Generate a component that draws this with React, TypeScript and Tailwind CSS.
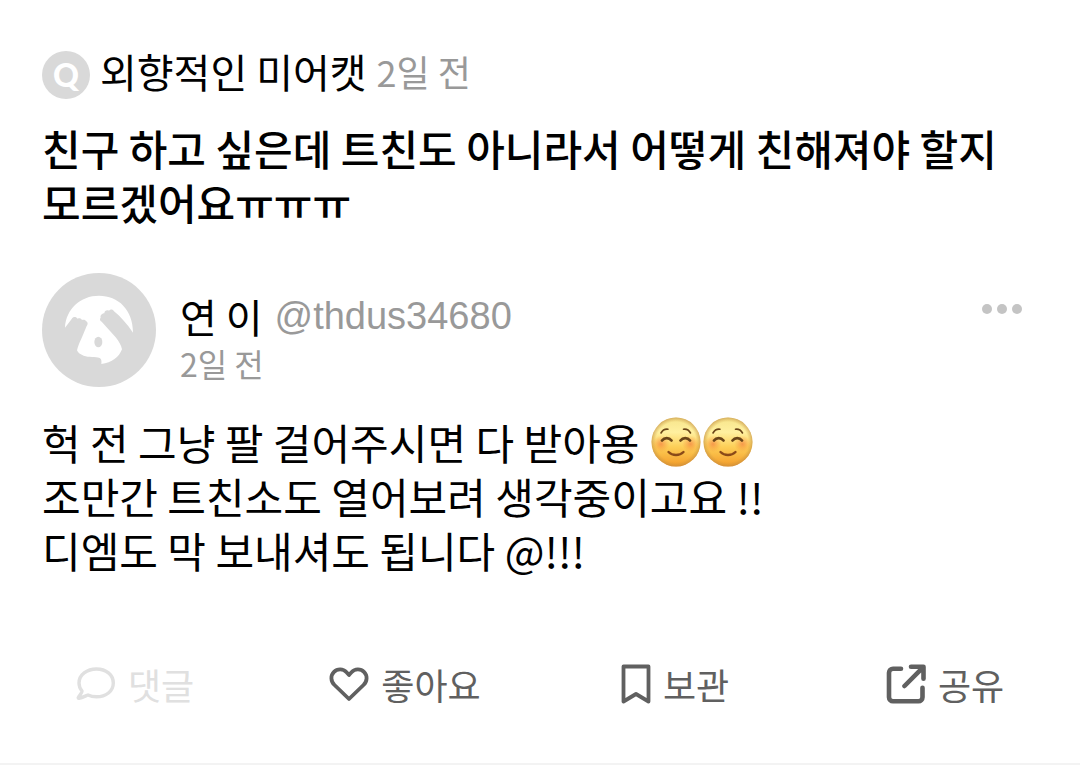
import React from "react";

interface ActionButtonProps {
  label: string;
  icon: React.ReactNode;
  disabled?: boolean;
}

const ActionButton: React.FC<ActionButtonProps> = ({ label, icon, disabled }) => {
  return (
    <button
      type="button"
      disabled={disabled}
      className="flex items-center justify-center gap-3 text-4xl leading-[54px] text-[#606060] disabled:text-[#e0e0e0]"
    >
      {icon}
      <span>{label}</span>
    </button>
  );
};

const CommentIcon = () => (
  <svg viewBox="0 0 40 40" className="w-10 h-10" fill="none" stroke="currentColor" strokeWidth="3.4" strokeLinejoin="round">
    <path d="M20.5 5C30 5 37.3 10.8 37.3 19s-7.3 13.8-16.8 13.8c-3 0-6-.6-8.5-1.8-1.6.5-5.5 2.7-9 3.3-.7.1-1-.6-.6-1.100 1.300-1.800 3.500-4.200 3.600-6.200C4.300 25 3 22.300 3 19 3 10.800 11 5 20.500 5Z" />
  </svg>
);

const HeartIcon = () => (
  <svg viewBox="0 0 40 40" className="w-10 h-10" fill="none" stroke="currentColor" strokeWidth="3.8" strokeLinejoin="round">
    <path d="M20 35 5.500 21C1.500 17 1.500 11.500 4.800 8.100c3.600-3.700 9.300-3.600 12.700.2L20 11l2.500-2.700c3.400-3.800 9.100-3.900 12.700-.2 3.300 3.400 3.300 8.900-.7 12.900Z" />
  </svg>
);

const BookmarkIcon = () => (
  <svg viewBox="0 0 30 40" className="w-[30px] h-10" fill="none" stroke="currentColor" strokeWidth="3.8" strokeLinejoin="round">
    <path d="M2.500 2.500h25v35L15 30 2.500 37.500Z" />
  </svg>
);

const ShareIcon = () => (
  <svg viewBox="0 0 40 40" className="w-10 h-10" fill="none" stroke="currentColor" strokeWidth="4.6" strokeLinecap="round" strokeLinejoin="round">
    <path d="M15 4.800H7A4 4 0 0 0 3 8.800v24.500a4 4 0 0 0 4 4h25.500a4 4 0 0 0 4-4v-9.500" />
    <path d="M25 2.800h12.500v12M37 3.300 18.500 22" />
  </svg>
);

const PandaAvatar = () => (
  <svg viewBox="0 0 342 342" className="w-[114px] h-[114px] shrink-0" role="img" aria-label="프로필">
    <circle cx="171" cy="171" r="171" fill="#d9d9d9" />
    <path
      fill="#fff"
      d="M69 164C72 108 115 68 171 68c58 0 102 42 102 111-18-26-37-48-57-64-3-6-11-7-15-2-7-3-14 1-14 8-7 0-13 7-11 13-4 4-2 10 3 12l42 47c10 12 16 23 19 36-9 24-30 40-62 44 1-8 1-14-5-18-12-5-33-1-48-7-10-4-17-8-20-16 3-14 9-26 14-37l15-36c4-5 4-11-1-14-2-4-8-6-13-4-3-6-9-6-13-4-5-6-13-7-18 1Z"
    />
    <ellipse cx="169" cy="207" rx="12" ry="16" fill="#d9d9d9" />
  </svg>
);

const SmileEmoji = () => (
  <svg viewBox="0 0 50 50" className="w-[50px] h-[50px]" role="img" aria-label="☺️">
    <defs>
      <linearGradient id="face" x1="0" y1="0" x2="0" y2="1">
        <stop offset="0" stopColor="#f7e48a" />
        <stop offset="0.3" stopColor="#fff0a0" />
        <stop offset="0.6" stopColor="#fdcf57" />
        <stop offset="1" stopColor="#f39a28" />
      </linearGradient>
      <radialGradient id="edge">
        <stop offset="0.82" stopColor="#c99a3a" stopOpacity="0" />
        <stop offset="1" stopColor="#c08a45" stopOpacity="0.6" />
      </radialGradient>
      <radialGradient id="cheek">
        <stop offset="0" stopColor="#f2703a" stopOpacity="0.6" />
        <stop offset="1" stopColor="#f58a35" stopOpacity="0" />
      </radialGradient>
    </defs>
    <circle cx="25" cy="25" r="24.5" fill="url(#face)" />
    <circle cx="25" cy="25" r="24.5" fill="url(#edge)" />
    <circle cx="10" cy="27" r="8.5" fill="url(#cheek)" />
    <circle cx="39.5" cy="27" r="8.5" fill="url(#cheek)" />
    <g fill="none" stroke="#6a4518" strokeLinecap="round">
      <path strokeWidth="1.6" d="M10 16c1.500-2.800 4-4.200 7-3.800M39.500 16c-1.500-2.800-4-4.200-7-3.800" />
      <path strokeWidth="2.8" d="M11 23.500c2.500-3.300 7-3.300 9.500 0M29.500 23.500c2.500-3.300 7-3.300 9.500 0" />
      <path strokeWidth="2.4" stroke="#8a4a18" d="M17.500 35c4 4 11 4 15 0" />
    </g>
  </svg>
);

const App: React.FC = () => {
  return (
    <main className="bg-white text-black font-['Noto_Sans_CJK_KR',sans-serif]">
      <article className="px-[42px] pt-11 pb-[52px] border-b-3 border-[#f3f3f3]">
        <header className="flex items-start gap-2.5 text-[40px] leading-[54px]">
          <span className="mt-[7px] flex items-center justify-center w-12 h-12 rounded-full bg-[#d9d9d9] text-white text-[32px] leading-none font-black font-['Lato',sans-serif]">
            Q
          </span>
          <span>외향적인 미어캣</span>
          <time className="text-4xl leading-[54px] text-[#999]">2일 전</time>
        </header>

        <h1 className="mt-[22px] text-[42px] leading-[54px] font-medium">
          친구 하고 싶은데 트친도 아니라서 어떻게 친해져야 할지 모르겠어요ㅠㅠㅠ
        </h1>

        <section className="mt-11 flex items-start">
          <PandaAvatar />
          <div className="ml-6 pt-4 flex-1">
            <div className="flex items-center gap-3 text-[40px] leading-[54px]">
              <span>연 이</span>
              <a href="#profile" className="text-[38px] text-[#999] font-['Liberation_Sans',sans-serif]">
                @thdus34680
              </a>
            </div>
            <time className="block text-[32px] leading-10 text-[#999]">2일 전</time>
          </div>
          <button type="button" aria-label="더보기" className="mt-[30px] mr-4 flex gap-[5px] py-px">
            <span className="w-2.5 h-2.5 rounded-full bg-[#c4c4c4]" />
            <span className="w-2.5 h-2.5 rounded-full bg-[#c4c4c4]" />
            <span className="w-2.5 h-2.5 rounded-full bg-[#c4c4c4]" />
          </button>
        </section>

        <div className="mt-7 text-[42px] leading-[54px]">
          <p className="flex items-center gap-3">
            <span>헉 전 그냥 팔 걸어주시면 다 받아용</span>
            <span className="flex gap-0.5">
              <SmileEmoji />
              <SmileEmoji />
            </span>
          </p>
          <p>조만간 트친소도 열어보려 생각중이고요 !!</p>
          <p>디엠도 막 보내셔도 됩니다 @!!!</p>
        </div>

        <footer className="mt-20 -mx-[42px] grid grid-cols-4">
          <ActionButton label="댓글" icon={<CommentIcon />} disabled />
          <ActionButton label="좋아요" icon={<HeartIcon />} />
          <ActionButton label="보관" icon={<BookmarkIcon />} />
          <ActionButton label="공유" icon={<ShareIcon />} />
        </footer>
      </article>
    </main>
  );
};

export default App;
